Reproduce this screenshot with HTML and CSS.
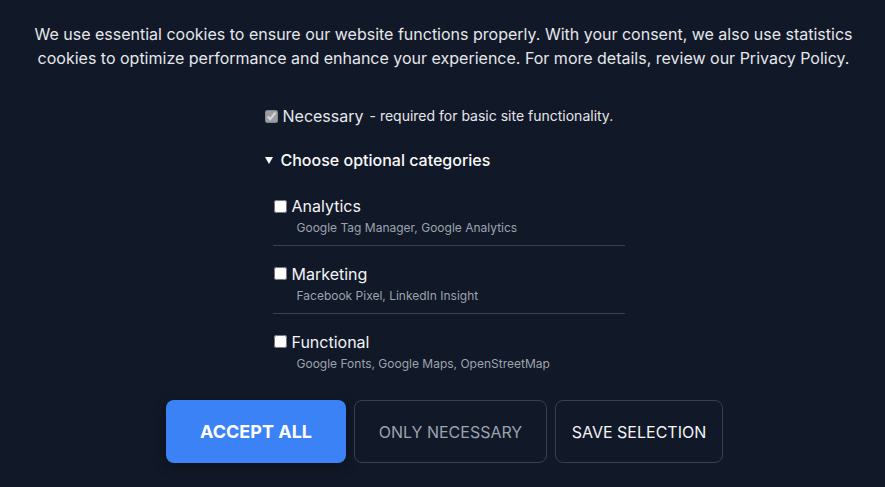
FILE: index.html
```html
<!DOCTYPE html>
<html lang="en">
<head>
<meta charset="utf-8">
<title>Cookie consent</title>
<link rel="stylesheet" href="styles.css">
</head>
<body>
<div class="banner">
  <p class="intro">We use essential cookies to ensure our website functions properly. With your consent, we also use statistics cookies to optimize performance and enhance your experience. For more details, review our Privacy Policy.</p>
  <div class="prefs">
    <label class="necessary">
      <input type="checkbox" class="box" checked disabled>
      <span class="necessary-name">Necessary</span>
      <span class="necessary-note">- required for basic site functionality.</span>
    </label>
    <details class="optional" open>
      <summary class="optional-title">Choose optional categories</summary>
      <div class="cat-list">
        <div class="cat">
          <label class="cat-label"><input type="checkbox" class="box"><span>Analytics</span></label>
          <div class="cat-desc">Google Tag Manager, Google Analytics</div>
        </div>
        <div class="cat">
          <label class="cat-label"><input type="checkbox" class="box"><span>Marketing</span></label>
          <div class="cat-desc">Facebook Pixel, LinkedIn Insight</div>
        </div>
        <div class="cat cat-last">
          <label class="cat-label"><input type="checkbox" class="box"><span>Functional</span></label>
          <div class="cat-desc">Google Fonts, Google Maps, OpenStreetMap</div>
        </div>
      </div>
    </details>
  </div>
  <div class="actions">
    <button class="btn btn-primary">ACCEPT ALL</button>
    <button class="btn btn-muted">ONLY NECESSARY</button>
    <button class="btn btn-outline">SAVE SELECTION</button>
  </div>
</div>
</body>
</html>
```
FILE: styles.css
```css
html, body {
  margin: 0;
  padding: 0;
  background: #111827;
}
body {
  font-family: Inter, "Noto Sans", sans-serif;
  color: #e5e7eb;
  width: 885px;
  height: 487px;
  overflow: hidden;
}
.banner {
  padding: 22px 31px 0 33px;
  display: flex;
  flex-direction: column;
  align-items: center;
}
.intro {
  margin: 0;
  font-size: 16px;
  line-height: 24px;
  text-align: center;
  color: #e5e7eb;
}
.prefs {
  width: 360px;
  margin-top: 34px;
  margin-left: 2px;
}
.necessary {
  display: flex;
  align-items: center;
  height: 24px;
}
.box {
  width: 13px;
  height: 13px;
  margin: 0;
  flex: none;
}
.necessary .box {
  margin-right: 5px;
}
.necessary-name {
  font-size: 16px;
  line-height: 24px;
  color: #e5e7eb;
}
.necessary-note {
  font-size: 14px;
  line-height: 24px;
  margin-left: 6px;
  color: #e5e7eb;
}
.optional {
  margin-top: 20px;
}
.optional-title {
  display: flex;
  align-items: center;
  gap: 8px;
  list-style: none;
  font-size: 16px;
  line-height: 24px;
  font-weight: 500;
  color: #f9fafb;
  cursor: pointer;
}
.optional-title::-webkit-details-marker {
  display: none;
}
.optional-title::before {
  content: "";
  width: 0;
  height: 0;
  border-left: 4px solid transparent;
  border-right: 4px solid transparent;
  border-top: 7px solid #f9fafb;
}
.cat-list {
  margin-left: 8px;
  margin-top: 6px;
}
.cat {
  padding: 16px 0 8px;
  border-bottom: 1px solid #374151;
}
.cat-last {
  border-bottom: none;
}
.cat-label {
  display: flex;
  align-items: center;
  font-size: 16px;
  line-height: 24px;
  color: #f3f4f6;
}
.cat-label .box {
  margin-left: 1px;
  margin-right: 5px;
}
.cat-desc {
  margin-top: 2px;
  padding-left: 24px;
  font-size: 12px;
  line-height: 16.8px;
  color: #9ca3af;
}
.actions {
  margin-top: 20px;
  margin-left: 2px;
  display: flex;
  gap: 8px;
}
.btn {
  height: 63px;
  border-radius: 8px;
  font-family: Inter, "Noto Sans", sans-serif;
  font-size: 16px;
  line-height: 24px;
  padding: 0;
  cursor: pointer;
  box-sizing: border-box;
}
.btn-primary {
  width: 180px;
  background: #3b82f6;
  border: none;
  color: #ffffff;
  font-size: 18px;
  font-weight: 700;
  box-shadow: 0 4px 12px rgba(0, 0, 0, 0.35);
}
.btn-muted {
  width: 193px;
  background: transparent;
  border: 1px solid #374151;
  color: #9ca3af;
  font-weight: 400;
}
.btn-outline {
  width: 168px;
  background: transparent;
  border: 1px solid #374151;
  color: #f3f4f6;
  font-weight: 400;
}
```
